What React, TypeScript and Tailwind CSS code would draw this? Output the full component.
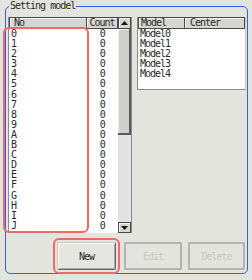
const rows = ["0","1","2","3","4","5","6","7","8","9","A","B","C","D","E","F","G","H","I","J"];
const models = ["Model0","Model1","Model2","Model3","Model4"];

const font = "font-['DejaVu_Sans_Mono','Liberation_Mono',monospace] text-[10px] tracking-[-1px]";

const HeaderCell = ({ label, className }: { label: string; className?: string }) => (
  <div
    className={`h-[12px] leading-[10px] bg-[#d6d6d0] border border-[#4a4a4a] shadow-[inset_1px_1px_0_#f4f4f0] text-[#2a2a2a] ${className ?? ""}`}
  >
    {label}
  </div>
);

const Arrow = ({ down }: { down?: boolean }) => (
  <svg width="7" height="4" viewBox="0 0 7 4">
    <polygon points={down ? "0,0 7,0 3.5,4" : "3.5,0 7,4 0,4"} fill="#111" />
  </svg>
);

export default function App() {
  return (
    <div className={`w-[252px] h-[280px] bg-[#e4e4de] pt-px pl-[5px] relative ${font}`}>
      <fieldset className="w-[243px] h-[273px] border border-[#3a5fe6] rounded-[5px] px-px">
        <legend className="ml-[2px] px-px leading-[10px] text-[#2a2a2a]">Setting model</legend>

        <div className="flex items-start gap-[5px] mt-[6px] ml-px">
          {/* left list */}
          <div className="w-[124px] h-[216px] flex bg-white border-l border-[#7c8cb0]">
            <div className="w-[109px] flex flex-col">
              <div className="flex">
                <HeaderCell label="No" className="w-[78px] pl-[4px]" />
                <HeaderCell label="Count" className="w-[32px] -ml-px text-center" />
              </div>
              {rows.map((r) => (
                <div key={r} className="flex h-[10.1px] leading-[10px] text-[#2a2a2a]">
                  <span className="w-[78px] pl-[2px]">{r}</span>
                  <span className="w-[32px] text-center">0</span>
                </div>
              ))}
            </div>
            <div className="w-[14px] flex flex-col bg-[#e2e2e2] border-r border-[#8a8a8a]">
              <div className="h-[12px] flex items-center justify-center bg-[#d6d6d0] border border-[#4a4a4a] shadow-[inset_1px_1px_0_#f4f4f0]">
                <Arrow />
              </div>
              <div className="h-[106px] bg-[#cfcfcb] border-r-2 border-b-2 border-[#5a5a5a] shadow-[inset_1px_1px_0_#f0f0ec]" />
              <div className="flex-1" />
              <div className="h-[11px] flex items-center justify-center bg-[#d6d6d0] border border-[#4a4a4a] shadow-[inset_1px_1px_0_#f4f4f0]">
                <Arrow down />
              </div>
            </div>
          </div>

          {/* right list */}
          <div className="w-[109px] h-[73px] bg-white border-l border-b border-[#8a8a8a] border-r border-r-[#c8c8c8]">
            <div className="flex">
              <HeaderCell label="Model" className="w-[47px] pl-[2px]" />
              <HeaderCell label="Center" className="flex-1 -ml-px pl-[5px]" />
            </div>
            {models.map((m) => (
              <div key={m} className="h-[10.1px] leading-[10px] pl-[2px] text-[#2a2a2a]">
                {m}
              </div>
            ))}
          </div>
        </div>

        <div className="flex justify-end mt-[9px] mr-px">
          <div className="p-[2px] border-2 border-[#f06868] rounded-[6px] -my-[4px]">
            <button className="w-[59px] h-[28px] bg-[#e6e6e0] border border-[#6a6a6a] border-t-[#c8c8c4] border-l-[#c8c8c4] shadow-[inset_1px_1px_0_#fafaf6,inset_-1px_-1px_0_#a8a8a4] rounded-[2px] text-[#2a2a2a]">
              New
            </button>
          </div>
          <button className="w-[58px] h-[28px] ml-[4px] border-2 border-[#b4b4b0] text-[#c8c8c2] rounded-[1px]">
            Edit
          </button>
          <button className="w-[57px] h-[28px] ml-[6px] border-2 border-[#b4b4b0] text-[#c8c8c2] rounded-[1px]">
            Delete
          </button>
        </div>
      </fieldset>

      {/* highlight over the number column */}
      <div className="absolute left-[3px] top-[27px] w-[86px] h-[206px] border-2 border-[#f06868] rounded-[6px] pointer-events-none" />
    </div>
  );
}
